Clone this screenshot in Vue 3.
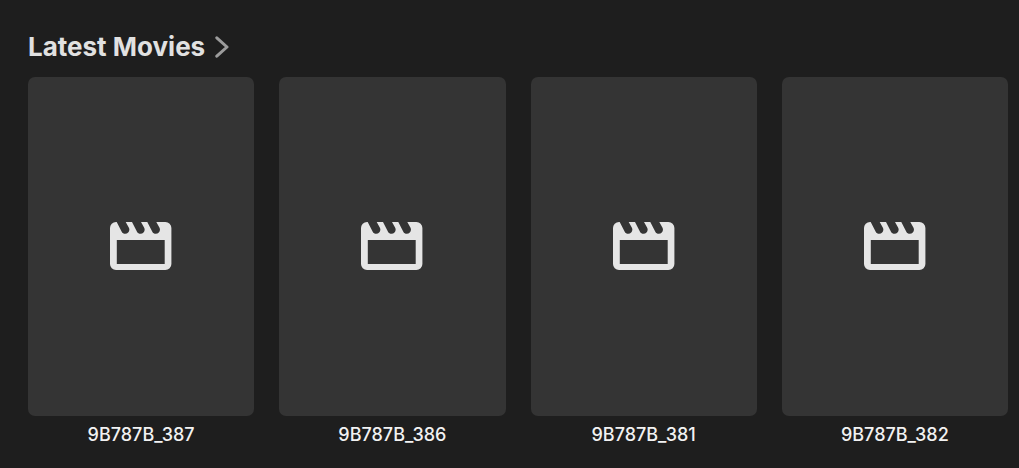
<script setup>
const movies = ['9B787B_387', '9B787B_386', '9B787B_381', '9B787B_382']
</script>

<template>
  <section class="latest" aria-labelledby="latest-title">
    <h2 id="latest-title" class="title">
      <a href="#movies" class="title-link">
        Latest Movies
        <svg class="chevron" viewBox="0 0 14 22" aria-hidden="true">
          <path d="M1.8 1.8 12 11 1.8 20.2" />
        </svg>
      </a>
    </h2>
    <ul class="row">
      <li v-for="name in movies" :key="name">
        <a href="#movie" class="movie">
          <span class="poster">
            <svg class="clapper" viewBox="0 0 62 50" aria-hidden="true">
              <path
                fill-rule="evenodd"
                d="M6 0h.7l5 9.7c.7 1.3 2 2.1 3.5 2.1 3.1 0 5.1-3.2 3.7-6L15.7 0h6.3l5 9.7c.7 1.3 2 2.1 3.5 2.1 3.1 0 5.1-3.2 3.7-6L31 0h6.3l5 9.7c.7 1.3 2 2.1 3.5 2.1 3.1 0 5.1-3.2 3.7-6L46.3 0h9.1a6 6 0 0 1 6 6v36a6 6 0 0 1-6 6H6a6 6 0 0 1-6-6V6a6 6 0 0 1 6-6zM6.8 18v24h47.9V18z"
              />
            </svg>
          </span>
          <span class="name">{{ name }}</span>
        </a>
      </li>
    </ul>
  </section>
</template>

<style>
body {
  margin: 0;
  background: #1e1e1e;
}
</style>

<style scoped>
.latest {
  padding: 29px 11px 20px 28px;
  font-family: Inter, sans-serif;
  color: #f2f2f2;
}
.title {
  margin: 0 0 12px;
  font-size: 26px;
  line-height: 36px;
  font-weight: 700;
}
.title-link {
  display: inline-flex;
  align-items: center;
  gap: 10px;
  color: #e1e1e1;
  text-decoration: none;
}
.chevron {
  width: 14px;
  height: 22px;
  fill: none;
  stroke: #9c9c9c;
  stroke-width: 3;
  stroke-linecap: round;
  stroke-linejoin: round;
}
.row {
  display: grid;
  grid-template-columns: repeat(4, 1fr);
  gap: 25px;
  margin: 0;
  padding: 0;
  list-style: none;
}
.movie {
  display: flex;
  flex-direction: column;
  color: inherit;
  text-decoration: none;
}
.poster {
  display: flex;
  align-items: center;
  justify-content: center;
  aspect-ratio: 2 / 3;
  border-radius: 7px;
  background: #343434;
}
.clapper {
  width: 62px;
  height: 50px;
  fill: #e5e5e5;
}
.name {
  margin-top: 6px;
  font-size: 18px;
  line-height: 26px;
  font-weight: 500;
  text-align: center;
}
</style>
